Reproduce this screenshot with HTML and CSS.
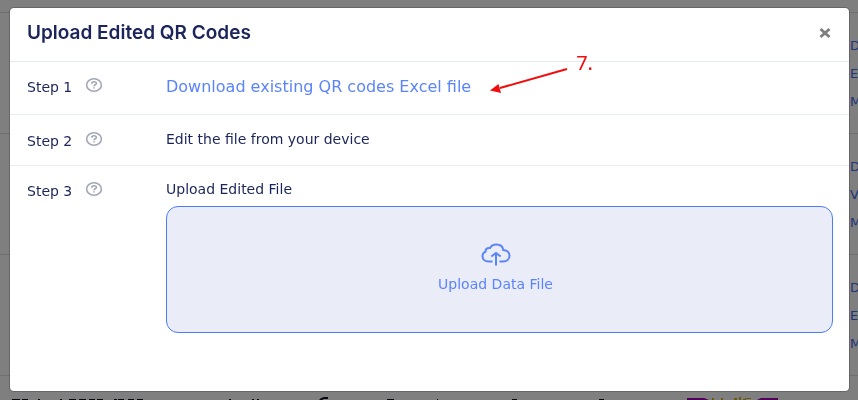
FILE: index.html
```html
<!DOCTYPE html>
<html lang="en">
<head>
<meta charset="utf-8">
<meta name="viewport" content="width=device-width, initial-scale=1">
<title>Upload Edited QR Codes</title>
<link rel="stylesheet" href="styles.css">
</head>
<body>
<svg class="sprite" aria-hidden="true">
  <symbol id="help" viewBox="0 0 18 16">
    <ellipse cx="9" cy="8" rx="7.4" ry="6.2"/>
    <path d="M6.7 6.7C6.7 5.300 7.600 4.700 9 4.700s2.400.6 2.400 1.700C11.400 7.700 9 7.700 9 9.200M9 10.300v1.300"/>
  </symbol>
</svg>
<main class="page">
  <section class="record"><a href="#">D</a><a href="#">E</a><a href="#">M</a></section>
  <section class="record"><a href="#">D</a><a href="#">V</a><a href="#">M</a></section>
  <section class="record"><a href="#">D</a><a href="#">E</a><a href="#">M</a></section>
  <section class="record record-last">
    <svg class="peek" viewBox="0 0 858 4" aria-hidden="true">
      <path class="ink" d="M12 3h8v1h-8zM22 3h6v1h-6zM38 3h2v1h-2zM60 3h2v1h-2zM69 3h7v1h-7zM79 3h7v1h-7zM89 3h6v1h-6zM97 3h6v1h-6zM114 3h3v1h-3zM118 3h6v1h-6zM128 3h6v1h-6zM137 3h6v1h-6zM229 3h2v1h-2zM252 3h2v1h-2zM257 3h2v1h-2zM321 2l3-1h4v2h-4l-2 1h-3zM387 3h7v1h-7zM437 3h1v1h-1zM512 3h5v1h-5zM599 3h5v1h-5z"/>
      <path class="purple" d="M687 2h17l5 2h-22zM757 4l4-2h17v2z"/>
      <path class="gold" d="M712 2h2v2h-2zM721 2h2v2h-2zM734 2h3v2h-3zM739 1h2v3h-2zM745 2h6v1h-6zM743 3h3v1h-3z"/>
    </svg>
  </section>
</main>
<div class="backdrop">
  <div class="dialog" role="dialog" aria-modal="true" aria-labelledby="title">
    <header class="dialog-head">
      <h1 id="title">Upload Edited QR Codes</h1>
      <button class="close" type="button" aria-label="Close">
        <svg viewBox="0 0 14 12"><path d="M2.5 2l9 8M11.5 2l-9 8"/></svg>
      </button>
    </header>
    <section class="step step-one">
      <h2>Step 1 <svg class="help"><use href="#help"/></svg></h2>
      <div class="download">
        <a href="#">Download existing QR codes Excel file</a>
        <div class="callout">
          <svg viewBox="0 0 80 32" aria-hidden="true"><path class="shaft" d="M77 7L10 26"/><path class="head" d="M0 28.500L8.500 22L11 31z"/></svg>
          <span>7.</span>
        </div>
      </div>
    </section>
    <section class="step step-two">
      <h2>Step 2 <svg class="help"><use href="#help"/></svg></h2>
      <p>Edit the file from your device</p>
    </section>
    <section class="step step-three">
      <h2>Step 3 <svg class="help"><use href="#help"/></svg></h2>
      <div>
        <p>Upload Edited File</p>
        <button class="upload" type="button">
          <svg viewBox="0 0 30 24" aria-hidden="true"><path d="M11.500 18.500H7.500C4 18.500 1.500 16.300 1.500 13.300c0-2.400 1.300-4 3.100-4.700C4.200 5.700 6.500 4.600 9 5c1.200-2.200 3.300-3.500 6.200-3.500 4 0 6.700 2.200 7.100 5.600 3.700.2 6.200 2.600 6.200 5.600 0 3.400-2.600 5.800-6.300 5.800H18.500M15 22.500V10M10.300 13.500L15 10l4.700 3.500"/></svg>
          <span>Upload Data File</span>
        </button>
      </div>
    </section>
  </div>
</div>
</body>
</html>
```
FILE: styles.css
```css
* { box-sizing: border-box; }
body {
  margin: 0;
  background: #fff;
  color: #1b2559;
  font-family: "DejaVu Sans", sans-serif;
}
h1, h2, p { margin: 0; font-weight: 400; }
a { color: #5b84fb; text-decoration: none; }
.sprite { display: none; }

.page { padding-top: 12px; overflow: hidden; }
.record {
  display: flex;
  flex-direction: column;
  align-items: flex-end;
  height: 121px;
  padding-top: 19px;
  border-top: 1px solid #dde0e8;
  font-size: 13px;
  line-height: 28px;
}
.record a { width: 8px; color: #4169f0; }
.record-last { height: auto; padding-top: 20px; }
.peek { display: block; width: 100%; }
.ink { fill: #101025; }
.purple { fill: #a000b0; }
.gold { fill: #d0b020; }

.backdrop {
  position: fixed;
  inset: 0;
  padding: 7px 8px 8px 9px;
  background: rgba(0, 0, 0, 0.5);
}
.dialog {
  height: 100%;
  background: #fff;
  background-clip: padding-box;
  border: 1px solid rgba(0, 0, 0, 0.2);
  border-radius: 5px;
}
.dialog-head {
  display: flex;
  align-items: center;
  justify-content: space-between;
  height: 54px;
  padding: 0 17px 4px;
  border-bottom: 1px solid #e6e8f0;
}
.dialog-head h1 {
  font-family: Inter, sans-serif;
  font-size: 19px;
  font-weight: 600;
}
.close {
  padding: 0;
  border: 0;
  background: none;
}
.close svg {
  display: block;
  width: 14px;
  height: 12px;
  fill: none;
  stroke: #808080;
  stroke-width: 3;
}

.step {
  display: grid;
  grid-template-columns: 139px minmax(0, 1fr);
  padding: 0 16px 0 17px;
  font-size: 14px;
  line-height: 20px;
}
.step h2 {
  display: flex;
  gap: 13px;
  font-size: 14px;
  line-height: 20px;
}
.help {
  width: 18px;
  height: 16px;
  fill: none;
  stroke: #a3a6b8;
  stroke-width: 1.6;
}
.step-one {
  height: 53px;
  padding-top: 15px;
  border-bottom: 1px solid #e9ebf5;
}
.download { display: flex; font-size: 16px; }
.callout {
  display: flex;
  gap: 6px;
  height: 38px;
  margin: -15px 0 0 19px;
  color: #f10d0c;
  font-family: "Noto Sans", sans-serif;
  font-size: 20px;
}
.callout svg { width: 80px; height: 32px; }
.callout span { margin-top: -9px; }
.shaft { fill: none; stroke: #f10d0c; stroke-width: 2; }
.head { fill: #f10d0c; }
.step-two {
  height: 51px;
  padding-top: 14px;
  border-bottom: 1px solid #e9ebf5;
}
.step-three { padding-top: 13px; }
.step-two h2, .step-three h2 { padding-top: 2px; }
.upload {
  display: flex;
  flex-direction: column;
  align-items: center;
  gap: 7px;
  width: 100%;
  height: 127px;
  margin-top: 7px;
  padding: 36px 8px 0 0;
  border: 1px solid #4c7df5;
  border-radius: 12px;
  background: #eaedf7;
  color: #5b84fb;
  font: 14px/20px "DejaVu Sans", sans-serif;
}
.upload svg {
  width: 30px;
  height: 24px;
  fill: none;
  stroke: #5b84fb;
  stroke-width: 2;
}
```
